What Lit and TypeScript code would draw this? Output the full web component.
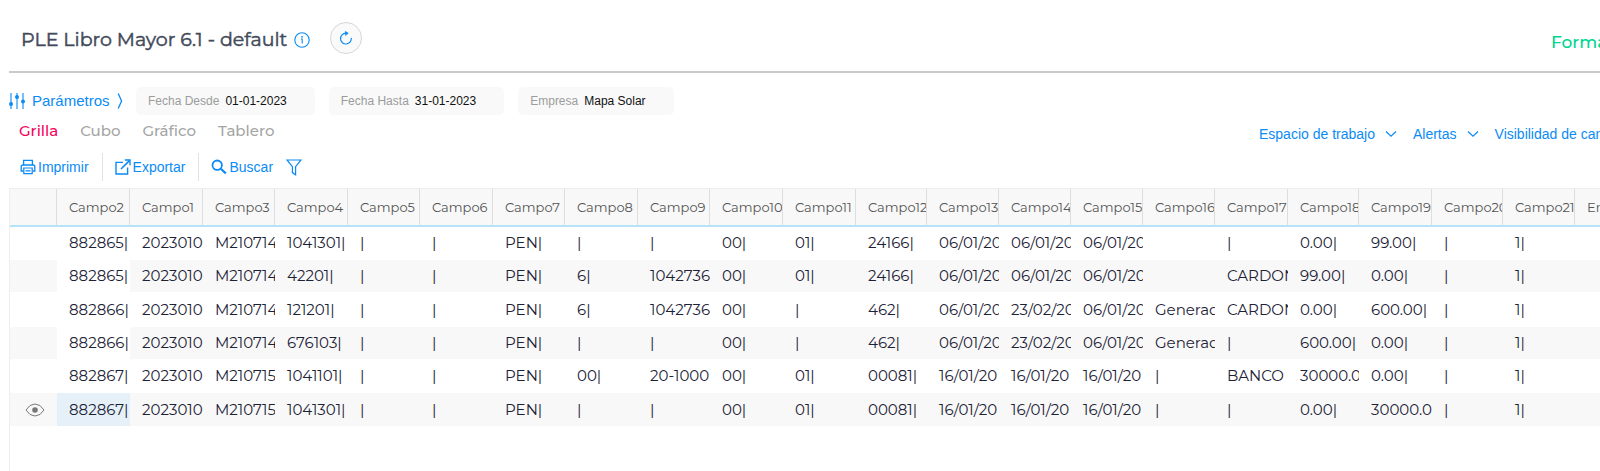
import { LitElement, html, css, svg } from "lit";
import { customElement, state } from "lit/decorators.js";
import { classMap } from "lit/directives/class-map.js";

interface Column { name: string; width: number; }

const COLUMNS: Column[] = [
  { name: "Campo2", width: 73 },
  { name: "Campo1", width: 73 },
  { name: "Campo3", width: 72 },
  { name: "Campo4", width: 73 },
  { name: "Campo5", width: 72 },
  { name: "Campo6", width: 73 },
  { name: "Campo7", width: 72 },
  { name: "Campo8", width: 73 },
  { name: "Campo9", width: 72 },
  { name: "Campo10", width: 73 },
  { name: "Campo11", width: 73 },
  { name: "Campo12", width: 71 },
  { name: "Campo13", width: 72 },
  { name: "Campo14", width: 72 },
  { name: "Campo15", width: 72 },
  { name: "Campo16", width: 72 },
  { name: "Campo17", width: 73 },
  { name: "Campo18", width: 71 },
  { name: "Campo19", width: 73 },
  { name: "Campo20", width: 71 },
  { name: "Campo21", width: 72 },
  { name: "Empresa", width: 72 },
];

const ROWS: string[][] = [
  ["882865|", "2023010", "M210714", "1041301|", "|", "|", "PEN|", "|", "|", "00|", "01|", "24166|", "06/01/20", "06/01/20", "06/01/20", "", "|", "0.00|", "99.00|", "|", "1|", ""],
  ["882865|", "2023010", "M210714", "42201|", "|", "|", "PEN|", "6|", "1042736", "00|", "01|", "24166|", "06/01/20", "06/01/20", "06/01/20", "", "CARDON", "99.00|", "0.00|", "|", "1|", ""],
  ["882866|", "2023010", "M210714", "121201|", "|", "|", "PEN|", "6|", "1042736", "00|", "|", "462|", "06/01/20", "23/02/20", "06/01/20", "Generad", "CARDON", "0.00|", "600.00|", "|", "1|", ""],
  ["882866|", "2023010", "M210714", "676103|", "|", "|", "PEN|", "|", "|", "00|", "|", "462|", "06/01/20", "23/02/20", "06/01/20", "Generad", "|", "600.00|", "0.00|", "|", "1|", ""],
  ["882867|", "2023010", "M210715", "1041101|", "|", "|", "PEN|", "00|", "20-1000", "00|", "01|", "00081|", "16/01/20", "16/01/20", "16/01/20", "|", "BANCO", "30000.0", "0.00|", "|", "1|", ""],
  ["882867|", "2023010", "M210715", "1041301|", "|", "|", "PEN|", "|", "|", "00|", "01|", "00081|", "16/01/20", "16/01/20", "16/01/20", "|", "|", "0.00|", "30000.0", "|", "1|", ""],
];

const icon = (w: number, h: number, body: unknown) => html`<svg
  width=${w} height=${h} viewBox="0 0 ${w} ${h}" fill="none" stroke="currentColor" aria-hidden="true">${body}</svg>`;

const infoIcon = icon(16, 16, svg`<circle cx="8" cy="8" r="7.2" stroke-width="1.1"/><path d="M7 7H8.2V11.6" stroke-width="1.1"/><circle cx="8" cy="4.8" r=".9" fill="currentColor" stroke="none"/>`);
const refreshIcon = icon(14, 14, svg`<path d="M12.3 6.9A5.4 5.4 0 1 1 6.9 2.2H8.6" stroke-width="1.2"/><path d="M6.3.3L9.3 2.3L6.5 4.6Z" fill="currentColor" stroke-width=".5"/>`);
const slidersIcon = icon(16, 18, svg`<path d="M2 1V17M8 1V17M14 1V17" stroke-width="1.1"/><g fill="currentColor" stroke="none"><circle cx="2" cy="12" r="2"/><circle cx="8" cy="5" r="2"/><circle cx="14" cy="9.5" r="2"/></g>`);
const angleIcon = icon(6, 18, svg`<path d="M1.2 1.5L4.6 9L1.2 16.5" stroke-width="1.3"/>`);
const printIcon = icon(16, 16, svg`<path d="M3.6 6V1.4H12.4V6M3.4 12H1.2V7.6Q1.2 6 2.8 6H13.2Q14.8 6 14.8 7.6V12H12.6" stroke-width="1.3"/><path d="M3.8 9H12.2V14.6H3.8ZM5.5 11.8H10.5" stroke-width="1.2"/>`);
const exportIcon = icon(16, 16, svg`<path d="M8 3.4H1V15H12.6V8.4" stroke-width="1.4"/><path d="M6 10L14.4 1.6" stroke-width="1.6"/><path d="M9.8 1H15V6.2" stroke-width="1.4"/>`);
const searchIcon = icon(16, 16, svg`<circle cx="6.2" cy="6.2" r="4.7" stroke-width="1.8"/><path d="M9.8 9.8L14.8 14.4" stroke-width="2.2"/>`);
const filterIcon = icon(16, 17, svg`<path d="M1 1H15L9.6 7.6V15.8L6.4 13.6V7.6Z" stroke-width="1.2"/>`);
const chevronIcon = icon(12, 8, svg`<path d="M1 1.5L6 6.2L11 1.5" stroke-width="1.2"/>`);
const eyeIcon = icon(20, 14, svg`<path d="M1 7Q4.6 1 10 1T19 7Q15.4 13 10 13T1 7Z" stroke-width="1"/><circle cx="10" cy="7" r="2.8" fill="currentColor" stroke="none"/>`);

@customElement("app-root")
export class AppRoot extends LitElement {
  static styles = css`
    :host {
      display: flex;
      flex-direction: column;
      min-height: 100vh;
      overflow: hidden;
      padding-left: 9px;
      box-sizing: border-box;
      background: #fff;
      --blue: #0a8bf5;
      --sans: "Liberation Sans", Arial, sans-serif;
      --display: Montserrat, Inter, sans-serif;
      font-family: var(--sans);
    }
    svg { display: block; flex: none; }
    button {
      font: inherit;
      color: inherit;
      background: none;
      border: 0;
      margin: 0;
      padding: 0;
      display: flex;
      align-items: center;
      white-space: nowrap;
      cursor: pointer;
    }
    .head {
      display: flex;
      align-items: center;
      height: 71px;
      padding: 5px 0 0 12px;
      box-sizing: border-box;
      font-family: var(--display);
    }
    .head-wrap { border-bottom: 2px solid #c8cbce; }
    h1 {
      margin: 0 7px 0 0;
      font-size: 19px;
      line-height: 26px;
      font-weight: 400;
      -webkit-text-stroke: 0.5px currentColor;
      color: #434a5a;
      padding-top: 4px;
      white-space: nowrap;
    }
    .info { color: var(--blue); padding-top: 4px; }
    .refresh {
      width: 32px;
      height: 32px;
      margin-left: 20px;
      justify-content: center;
      box-sizing: border-box;
      border: 1px solid #d6d6d6;
      border-radius: 50%;
      background: #fafafa;
      color: var(--blue);
    }
    .format {
      flex: 0 0 49px;
      min-width: 0;
      margin-left: auto;
      padding-top: 8px;
      font-size: 17px;
      line-height: 22px;
      font-weight: 500;
      color: #00d492;
    }
    .params { display: flex; align-items: center; padding-top: 14px; }
    .params-toggle { gap: 7px; width: 127px; font-size: 15px; line-height: 20px; color: var(--blue); }
    .chips { display: flex; gap: 14px; margin: 0; }
    .chip {
      display: flex;
      gap: 6px;
      padding: 6px 28px 6px 12px;
      border-radius: 5px;
      background: #f9f9f9;
      font-size: 12px;
      line-height: 16px;
      white-space: nowrap;
    }
    dt { color: #9c9c9c; }
    dd { margin: 0; color: #111; }
    .views { display: flex; justify-content: space-between; padding: 4px 0 0 10px; }
    .tabs { display: flex; gap: 22px; font: 500 15px/20px var(--display); color: #a5a5a5; height: 24px; }
    .tab.active { color: #f5005e; }
    .menus { flex: 0 0 341px; min-width: 0; display: flex; gap: 16px; padding-top: 6px; font-size: 14px; line-height: 16px; color: var(--blue); }
    .menu { flex: none; gap: 10px; }
    .tools { display: flex; align-items: center; padding: 10px 0 7px 11px; font-size: 14px; line-height: 16px; color: var(--blue); }
    .tool { gap: 2px; height: 28px; }
    .tool.ruled { padding-right: 13px; margin-right: 12px; border-right: 1px solid #e2e2e2; }
    .filter { margin-left: 13px; }
    .grid { flex: 1; border: solid #eee; border-width: 1px 0 0 1px; }
    table { table-layout: fixed; width: 0; border-collapse: separate; border-spacing: 0; font-family: var(--display); }
    th, td { overflow: hidden; white-space: nowrap; text-align: left; box-sizing: border-box; padding: 0 0 0 12px; }
    th {
      height: 38px;
      font-size: 13px;
      line-height: 16px;
      font-weight: 400;
      color: #555;
      background: #f8f8f8;
      border-right: 1px solid #dedede;
      border-bottom: 2px solid #b5e3f8;
    }
    td { height: 33px; font-size: 15px; line-height: 20px; font-weight: 400; color: #1c2236; border-bottom: 1px solid #fff; }
    tr:nth-child(3n) td { height: 34px; }
    tr:nth-child(even) td { background: #f8f8f8; }
    tr td.key { background: #fff; }
    tr.current td.key { background: #e5f0f9; }
    td.action { padding-left: 15px; color: #777; }
  `;

  @state() private tab = "Grilla";
  @state() private current = 5;

  render() {
    return html`
      <header class="head-wrap">
        <div class="head">
          <h1>PLE Libro Mayor 6.1 - default</h1>
          <button class="info" aria-label="Información">${infoIcon}</button>
          <button class="refresh" aria-label="Actualizar">${refreshIcon}</button>
          <button class="format">Formato</button>
        </div>
      </header>
      <section class="params">
        <button class="params-toggle">${slidersIcon}<span>Parámetros</span>${angleIcon}</button>
        <dl class="chips">
          <div class="chip"><dt>Fecha Desde</dt><dd>01-01-2023</dd></div>
          <div class="chip"><dt>Fecha Hasta</dt><dd>31-01-2023</dd></div>
          <div class="chip"><dt>Empresa</dt><dd>Mapa Solar</dd></div>
        </dl>
      </section>
      <section class="views">
        <nav class="tabs">
          ${["Grilla", "Cubo", "Gráfico", "Tablero"].map(
            (t) => html`<button class=${classMap({ tab: true, active: t === this.tab })} @click=${() => (this.tab = t)}>${t}</button>`
          )}
        </nav>
        <div class="menus">
          ${["Espacio de trabajo", "Alertas", "Visibilidad de campos"].map(
            (m) => html`<button class="menu">${m}${chevronIcon}</button>`
          )}
        </div>
      </section>
      <section class="tools">
        <button class="tool ruled">${printIcon}Imprimir</button>
        <button class="tool ruled">${exportIcon}Exportar</button>
        <button class="tool">${searchIcon}Buscar</button>
        <button class="filter" aria-label="Filtrar">${filterIcon}</button>
      </section>
      <main class="grid">
        <table>
          <colgroup>
            <col style="width:47px" />
            ${COLUMNS.map((c) => html`<col style="width:${c.width}px" />`)}
          </colgroup>
          <thead>
            <tr><th></th>${COLUMNS.map((c) => html`<th scope="col">${c.name}</th>`)}</tr>
          </thead>
          <tbody>
            ${ROWS.map(
              (row, r) => html`<tr class=${classMap({ current: r === this.current })} @click=${() => (this.current = r)}>
                <td class="action">${r === this.current ? html`<button aria-label="Ver registro">${eyeIcon}</button>` : ""}</td>
                ${row.map((v, c) => html`<td class=${classMap({ key: c === 0 })}>${v}</td>`)}
              </tr>`
            )}
          </tbody>
        </table>
      </main>
    `;
  }
}
